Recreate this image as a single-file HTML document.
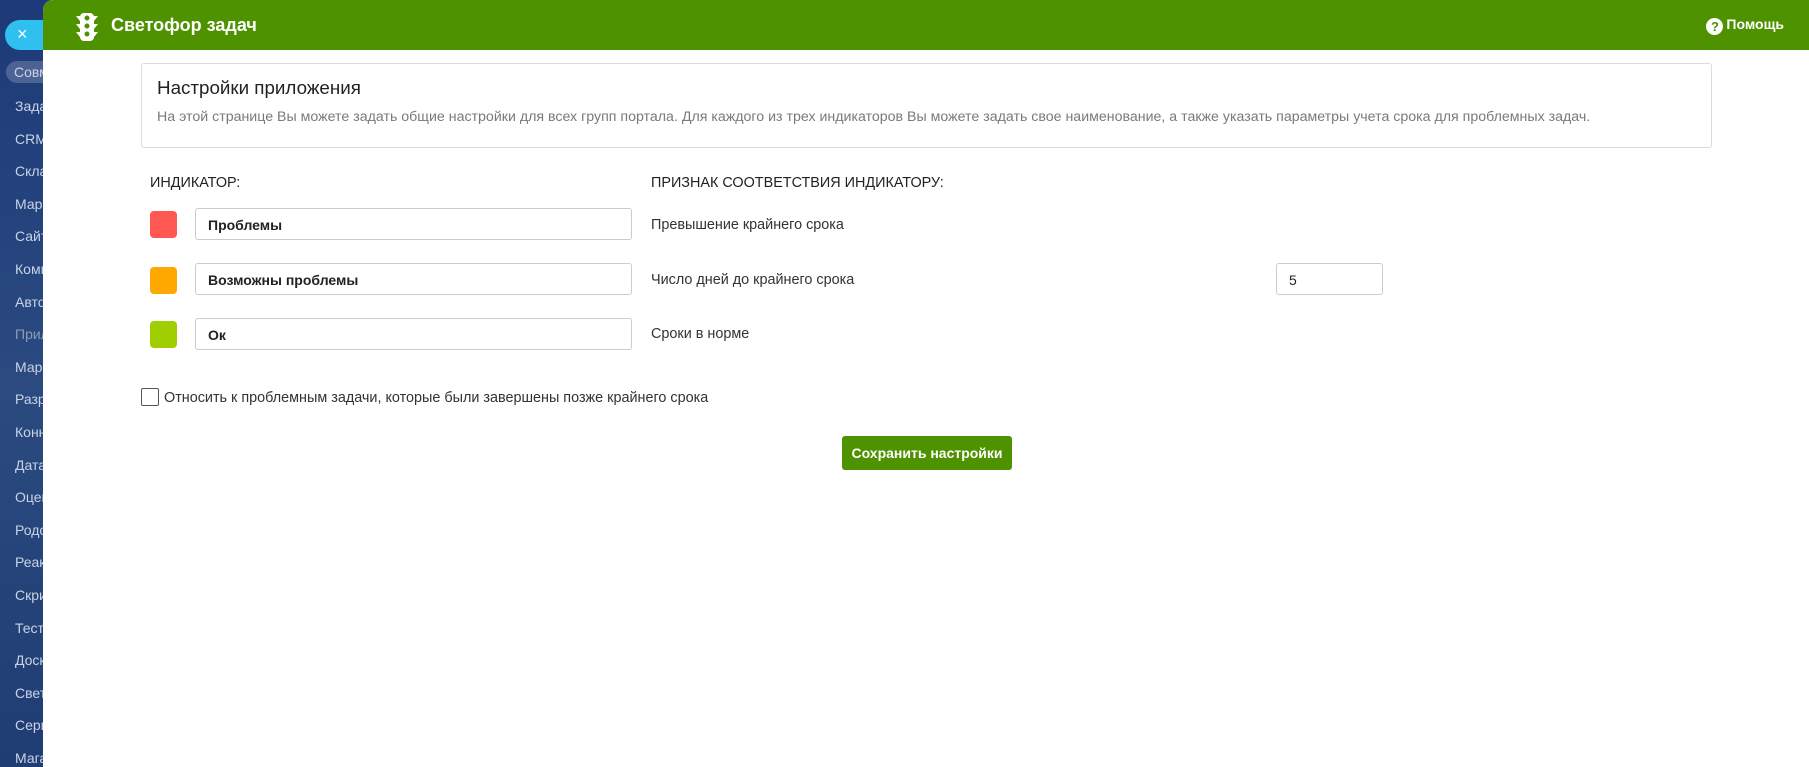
<!DOCTYPE html>
<html><head><meta charset="utf-8"><style>
*{box-sizing:border-box;margin:0;padding:0}
body{width:1809px;height:767px;overflow:hidden;font-family:"Liberation Sans",sans-serif;background:#fff;position:relative}
#side{position:absolute;left:0;top:0;width:60px;height:767px;background:linear-gradient(180deg,#1d3a78 0%,#2a4a80 50%,#1f3d73 100%)}
#side div{position:absolute;left:15px;color:#c9d3e6;font-size:14px;white-space:nowrap}
#panel{position:absolute;left:43px;top:0;width:1766px;height:767px;background:#fff;border-top-left-radius:10px;overflow:hidden}
#hdr{height:50px;background:#4e9200;position:relative;border-top-left-radius:10px}
#hdr .t{position:absolute;left:68px;top:15px;color:#fff;font-weight:bold;font-size:18px}
#hdr .h{position:absolute;right:25px;top:16px;color:#fff;font-weight:bold;font-size:14px}
.abs{position:absolute}
.card{left:98px;top:63px;width:1571px;height:85px;border:1px solid #dcdcdc;border-radius:3px}
.sw{width:27px;height:27px;border-radius:4px}
.inp{width:437px;height:32px;border:1px solid #ccc;border-radius:3px;font-size:14px;font-weight:bold;color:#222;padding:8px 12px}
.lbl{font-size:14.4px;color:#333;white-space:nowrap}
</style></head><body>
<div id="side">
<div style="top:20px;left:5px;width:55px;height:30px;border-radius:15px;background:#2fc0f0;color:#fff;font-size:18px;padding:4px 0 0 12px">×</div>
<div style="top:61px;left:6px;width:60px;height:22px;border-radius:11px;background:rgba(255,255,255,.2);padding:3px 8px">Совм</div>
<div style="top:98px">Задачи</div><div style="top:131px">CRM</div><div style="top:163px">Склад</div><div style="top:196px">Марк</div><div style="top:228px">Сайт</div><div style="top:261px">Комп</div><div style="top:294px">Авто</div><div style="top:326px;color:#8e9bb5">Прил</div><div style="top:359px">Марк</div><div style="top:391px">Разр</div><div style="top:424px">Конн</div><div style="top:457px">Дата</div><div style="top:489px">Оцен</div><div style="top:522px">Родо</div><div style="top:554px">Реак</div><div style="top:587px">Скри</div><div style="top:620px">Тест</div><div style="top:652px">Доск</div><div style="top:685px">Свет</div><div style="top:717px">Серв</div><div style="top:750px">Мага</div>
</div>
<div id="panel">
<div id="hdr">
<svg class="abs" style="left:33px;top:13px" width="22" height="28" viewBox="0 0 22 28"><rect x="4" y="0" width="14" height="28" rx="4" fill="#fff"/><path d="M0 3h4v5zM22 3h-4v5zM0 11h4v5zM22 11h-4v5zM0 19h4v5zM22 19h-4v5z" fill="#fff"/><circle cx="11" cy="5" r="2.5" fill="#4e9200"/><circle cx="11" cy="13" r="2.5" fill="#4e9200"/><circle cx="11" cy="21" r="2.5" fill="#4e9200"/></svg>
<div class="t">Светофор задач</div>
<div class="h"><span style="display:inline-block;width:17px;height:17px;border-radius:50%;background:#fff;color:#4e9200;text-align:center;font-size:13px;line-height:17px;margin-right:3px;vertical-align:-2px">?</span>Помощь</div>
</div>
<div class="abs card">
<div class="abs" style="left:15px;top:13px;font-size:18.8px;color:#222">Настройки приложения</div>
<div class="abs" style="left:15px;top:45px;font-size:14.2px;color:#7a7a7a;white-space:nowrap">На этой странице Вы можете задать общие настройки для всех групп портала. Для каждого из трех индикаторов Вы можете задать свое наименование, а также указать параметры учета срока для проблемных задач.</div>
</div>
<div class="abs lbl" style="left:107px;top:175px;color:#222">ИНДИКАТОР:</div>
<div class="abs lbl" style="left:608px;top:175px;color:#222">ПРИЗНАК СООТВЕТСТВИЯ ИНДИКАТОРУ:</div>
<div class="abs sw" style="left:107px;top:211px;background:#ff5752"></div>
<div class="abs inp" style="left:152px;top:208px">Проблемы</div>
<div class="abs lbl" style="left:608px;top:217px">Превышение крайнего срока</div>
<div class="abs sw" style="left:107px;top:267px;background:#ffa900"></div>
<div class="abs inp" style="left:152px;top:263px">Возможны проблемы</div>
<div class="abs lbl" style="left:608px;top:272px">Число дней до крайнего срока</div>
<div class="abs inp" style="left:1233px;top:263px;width:107px;font-weight:normal">5</div>
<div class="abs sw" style="left:107px;top:321px;background:#9fcf00"></div>
<div class="abs inp" style="left:152px;top:318px">Ок</div>
<div class="abs lbl" style="left:608px;top:326px">Сроки в норме</div>
<div class="abs" style="left:98px;top:388px;width:18px;height:18px;border:1px solid #555;border-radius:2px"></div>
<div class="abs lbl" style="left:121px;top:390px">Относить к проблемным задачи, которые были завершены позже крайнего срока</div>
<div class="abs" style="left:799px;top:436px;width:170px;height:34px;background:#4e9200;border-radius:3px;color:#fff;font-weight:bold;font-size:14px;text-align:center;line-height:34px">Сохранить настройки</div>
</div>
</body></html>
